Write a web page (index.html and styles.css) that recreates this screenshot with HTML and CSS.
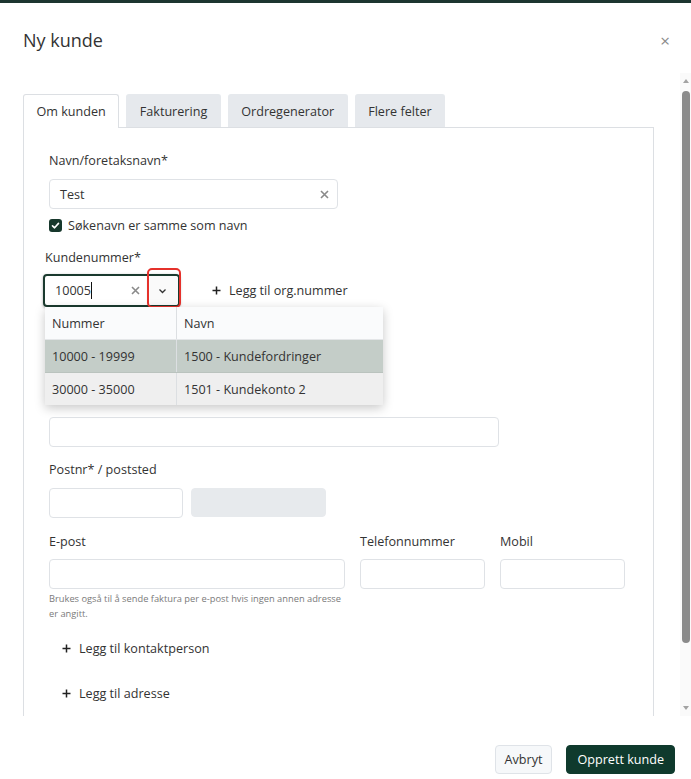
FILE: index.html
```html
<!DOCTYPE html>
<html lang="nb">
<head>
  <meta charset="UTF-8" />
  <meta name="viewport" content="width=device-width, initial-scale=1.0"/>
  <title>Ny kunde</title>
  <link rel="stylesheet" href="styles.css">
</head>
<body>
  <div class="topbar"></div>

  <div class="modal">
    <header class="modal-head">
      <h1>Ny kunde</h1>
      <button class="close" type="button">&times;</button>
    </header>

    <div class="modal-body">
      <div class="scroll-content">
        <div class="tabs">
          <div class="tab active">Om kunden</div>
          <div class="tab">Fakturering</div>
          <div class="tab">Ordregenerator</div>
          <div class="tab">Flere felter</div>
        </div>

        <div class="panel">
          <label class="label">Navn/foretaksnavn*</label>
          <div class="input input-name">
            <span class="value">Test</span>
            <svg class="clear" width="9" height="9" viewBox="0 0 9 9"><path d="M1 1L8 8M8 1L1 8" stroke="#8a8a8a" stroke-width="1.6"/></svg>
          </div>

          <div class="check-row">
            <span class="checkbox">
              <svg width="9" height="9" viewBox="0 0 9 9"><path d="M1.5 4.8L3.6 6.8L7.5 2.4" fill="none" stroke="#fff" stroke-width="1.6" stroke-linecap="round" stroke-linejoin="round"/></svg>
            </span>
            <span>Søkenavn er samme som navn</span>
          </div>

          <label class="label label-kundenr">Kundenummer*</label>
          <div class="kundenr-row">
            <div class="combo-wrap">
              <div class="combo">
                <span class="value">10005<span class="caret"></span></span>
                <svg class="clear" width="9" height="9" viewBox="0 0 9 9"><path d="M1 1L8 8M8 1L1 8" stroke="#8a8a8a" stroke-width="1.6"/></svg>
                <span class="chevron">
                  <svg width="9" height="6" viewBox="0 0 9 6"><path d="M1.5 1.5L4.5 4.5L7.5 1.5" fill="none" stroke="#333" stroke-width="1.3"/></svg>
                </span>
                <span class="mark"></span>
              </div>

              <div class="dropdown">
                <table>
                  <tr class="head"><td>Nummer</td><td>Navn</td></tr>
                  <tr class="selected"><td>10000 - 19999</td><td>1500 - Kundefordringer</td></tr>
                  <tr class="other"><td>30000 - 35000</td><td>1501 - Kundekonto 2</td></tr>
                </table>
              </div>
            </div>

            <a class="add-link org-link">
              <svg width="9" height="9" viewBox="0 0 9 9"><path d="M4.5 0.5V8.5M0.5 4.5H8.5" stroke="#222" stroke-width="1.5"/></svg>
              Legg til org.nummer
            </a>
          </div>

          <div class="input input-address"></div>

          <label class="label label-post">Postnr* / poststed</label>
          <div class="post-row">
            <div class="input input-postnr"></div>
            <div class="input input-poststed"></div>
          </div>

          <div class="contact-grid">
            <div>
              <label class="label">E-post</label>
              <div class="input"></div>
              <p class="help">Brukes også til å sende faktura per e-post hvis ingen annen adresse er angitt.</p>
            </div>
            <div>
              <label class="label">Telefonnummer</label>
              <div class="input"></div>
            </div>
            <div>
              <label class="label">Mobil</label>
              <div class="input"></div>
            </div>
          </div>

          <a class="add-link add-row first">
            <svg width="9" height="9" viewBox="0 0 9 9"><path d="M4.5 0.5V8.5M0.5 4.5H8.5" stroke="#222" stroke-width="1.5"/></svg>
            Legg til kontaktperson
          </a>
          <a class="add-link add-row">
            <svg width="9" height="9" viewBox="0 0 9 9"><path d="M4.5 0.5V8.5M0.5 4.5H8.5" stroke="#222" stroke-width="1.5"/></svg>
            Legg til adresse
          </a>
        </div>
      </div>

      <div class="scrollbar">
        <span class="arrow arrow-up"></span>
        <span class="thumb"></span>
        <span class="arrow arrow-down"></span>
      </div>
    </div>

    <footer class="modal-foot">
      <button class="btn btn-cancel" type="button">Avbryt</button>
      <button class="btn btn-primary" type="button">Opprett kunde</button>
    </footer>
  </div>
</body>
</html>
```

FILE: styles.css
```css
body {
  margin: 0;
  font-family: "Open Sans", "Noto Sans", sans-serif;
  color: #333;
  background: #fff;
  overflow: hidden;
}
.topbar {
  height: 3px;
  background: #1c3530;
}
.modal-head {
  height: 70px;
  box-sizing: border-box;
  padding: 4px 21px 0 23px;
  display: flex;
  align-items: center;
  justify-content: space-between;
}
h1 {
  margin: 0;
  font-size: 18px;
  font-weight: 400;
  color: #333;
}
.close {
  border: 0;
  background: none;
  padding: 0;
  font-size: 17px;
  color: #8a8a8a;
  font-family: inherit;
}

/* scroll area */
.modal-body {
  height: 643px;
  display: flex;
}
.scroll-content {
  flex: 1;
  overflow: hidden;
  padding: 21px 26px 0 23px;
}
.scrollbar {
  width: 11px;
  background: #fafafa;
  display: flex;
  flex-direction: column;
  align-items: center;
  padding: 3px 0 6px;
  box-sizing: border-box;
}
.arrow {
  width: 0;
  height: 0;
  border-left: 3.5px solid transparent;
  border-right: 3.5px solid transparent;
}
.arrow-up {
  border-bottom: 4px solid #a3a3a3;
  margin: 3px 0 8px;
}
.arrow-down {
  border-top: 4px solid #a3a3a3;
  margin-top: auto;
}
.thumb {
  width: 8px;
  height: 552px;
  border-radius: 4px;
  background: #8a8a8a;
  margin-left: 1px;
}

/* tabs */
.tabs {
  display: flex;
  gap: 7px;
  font-size: 12.6px;
}
.tab {
  height: 33px;
  box-sizing: border-box;
  padding: 0 12.5px;
  display: flex;
  align-items: center;
  background: #e6e9ed;
  border: 1px solid #e6e9ed;
  border-bottom: 0;
  border-radius: 3px 3px 0 0;
}
.tab.active {
  height: 34px;
  margin-bottom: -1px;
  background: #fff;
  border-color: #dcdfe3;
  position: relative;
  z-index: 1;
}
.panel {
  border: 1px solid #dcdfe3;
  border-bottom: 0;
  padding: 24px 25px 100px;
  font-size: 12.6px;
}

/* form bits */
.label {
  display: block;
  font-size: 12.6px;
  line-height: 18px;
  margin-bottom: 9px;
}
.input {
  height: 30px;
  box-sizing: border-box;
  border: 1px solid #dfe2e6;
  border-radius: 4px;
  background: #fff;
}
.input-name {
  width: 289px;
  display: flex;
  align-items: center;
  justify-content: space-between;
  padding: 0 8px 0 10px;
}
.check-row {
  margin-top: 8px;
  height: 16px;
  display: flex;
  align-items: center;
  gap: 6px;
}
.checkbox {
  width: 13px;
  height: 13px;
  border-radius: 3px;
  background: #17382c;
  display: flex;
  align-items: center;
  justify-content: center;
}
.label-kundenr {
  margin-top: 16px;
  margin-left: -4px;
  margin-bottom: 7px;
}
.kundenr-row {
  display: flex;
  align-items: center;
}
.combo-wrap {
  position: relative;
  margin-left: -6px;
}
.combo {
  position: relative;
  width: 137px;
  height: 33px;
  box-sizing: border-box;
  border: 2px solid #1a3a2e;
  border-radius: 4px;
  box-shadow: 0 1px 3px rgba(0, 0, 0, 0.35);
  display: flex;
  align-items: center;
  padding-left: 10px;
}
.combo .value {
  flex: 1;
  display: flex;
  align-items: center;
}
.caret {
  display: inline-block;
  width: 1px;
  height: 17px;
  background: #111;
}
.combo .clear {
  margin-right: 6px;
}
.chevron {
  width: 32px;
  height: 100%;
  display: flex;
  align-items: center;
  justify-content: center;
  background: #fafafa;
  border-radius: 0 3px 3px 0;
}
.mark {
  position: absolute;
  left: 102px;
  top: -8px;
  width: 34px;
  height: 40px;
  box-sizing: border-box;
  border: 2px solid #e5312b;
  border-radius: 5px;
}
.dropdown {
  position: absolute;
  left: 2px;
  top: 100%;
  width: 338px;
  background: #fff;
  box-shadow: 0 3px 10px rgba(0, 0, 0, 0.22);
  z-index: 5;
}
.dropdown table {
  width: 100%;
  border-collapse: collapse;
  font-size: 12.6px;
}
.dropdown td {
  height: 32px;
  padding: 0 7px;
  border-bottom: 1px solid #e4e6e8;
}
.dropdown td:first-child {
  width: 117px;
  border-right: 1px solid #dcdfe2;
}
.dropdown .head td {
  background: #fafbfc;
}
.dropdown .selected td {
  background: #c4cdc8;
  border-bottom-color: #bac3be;
}
.dropdown .other td {
  background: #efefef;
  border-bottom: 0;
}
.add-link {
  display: flex;
  align-items: center;
  gap: 8px;
  font-size: 12.6px;
  color: #333;
}
.org-link {
  margin-left: 32px;
}
.input-address {
  width: 450px;
  margin-top: 110px;
}
.label-post {
  margin-top: 14px;
}
.post-row {
  display: flex;
  gap: 8px;
}
.input-postnr {
  width: 134px;
}
.input-poststed {
  width: 135px;
  height: 29px;
  background: #e7eaed;
  border-color: #e7eaed;
}
.contact-grid {
  margin-top: 15px;
  display: grid;
  grid-template-columns: 296px 125px 125px;
  column-gap: 15px;
}
.contact-grid .label {
  margin-bottom: 8px;
}
.help {
  margin: 2px 0 0;
  font-size: 9.3px;
  line-height: 15px;
  color: #7a7a7a;
}
.add-row {
  height: 30px;
  padding-left: 13px;
  margin-top: 15px;
}
.add-row.first {
  margin-top: 12px;
}

/* footer */
.modal-foot {
  height: 63px;
  box-sizing: border-box;
  padding: 29px 16px 0 0;
  display: flex;
  justify-content: flex-end;
  align-items: flex-start;
  gap: 14px;
}
.btn {
  height: 29px;
  padding: 0 9px;
  border-radius: 4px;
  font-family: inherit;
  font-size: 12.6px;
}
.btn-cancel {
  background: #f6f8fa;
  border: 1px solid #dfe3e8;
  color: #333;
}
.btn-primary {
  background: #0f3a2d;
  border: 1px solid #0f3a2d;
  color: #fff;
  padding: 0 10px;
}
```
